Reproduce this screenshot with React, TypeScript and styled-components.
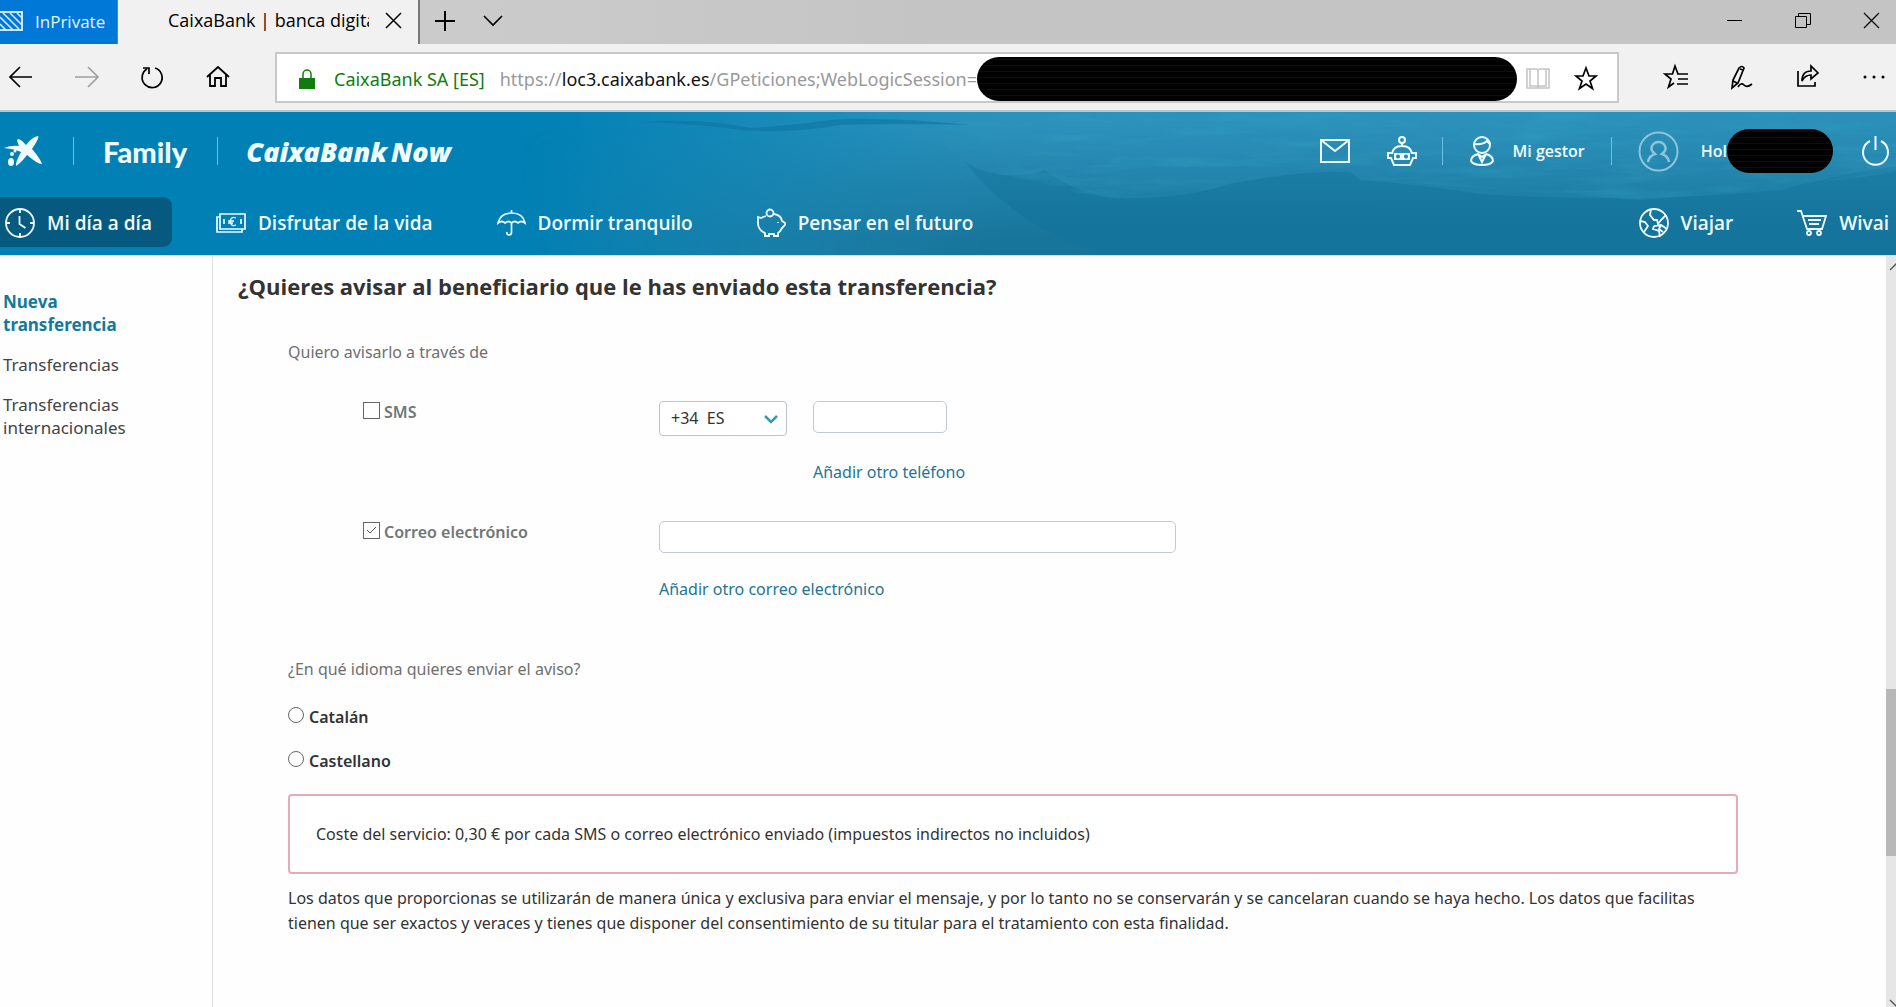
import React, { useState } from "react";
import styled, { createGlobalStyle } from "styled-components";

const GlobalStyle = createGlobalStyle`
  * { box-sizing: border-box; }
  body { margin: 0; background: #fefefe; font-family: "Noto Sans", "Open Sans", sans-serif; color: #333; }
  button { font: inherit; color: inherit; background: none; border: 0; padding: 0; cursor: pointer; }
  a { color: inherit; text-decoration: none; }
  svg { display: block; flex: none; overflow: visible; }
`;

const Page = styled.div`
  display: flex;
  flex-direction: column;
  min-height: 100vh;
`;

/* Browser chrome */

const TitleBar = styled.div`
  display: flex;
  height: 44px;
  background: linear-gradient(90deg, #cbcbcb 25%, #c4c4c4 50%);
  color: #000;
`;

const PrivateBadge = styled.div`
  display: flex;
  align-items: center;
  gap: 12px;
  width: 118px;
  padding-bottom: 2px;
  background: #0078d7;
  border-right: 1px solid #6d7f92;
  color: #e4f3ff;
  font: 17px "Open Sans", sans-serif;
`;

const Tab = styled.div`
  display: flex;
  align-items: center;
  gap: 17px;
  width: 302px;
  padding: 0 17px 4px 50px;
  background: #f1f1f1;
  border-right: 2px solid #777;
`;

const TabTitle = styled.span`
  flex: 1;
  overflow: hidden;
  white-space: nowrap;
  font: 18px "Open Sans", sans-serif;
`;

const TabTools = styled.div`
  display: flex;
  align-items: center;
  gap: 28px;
  padding: 0 0 2px 15px;
`;

const WindowControls = styled.div`
  display: flex;
  align-items: center;
  gap: 53px;
  margin-left: auto;
  padding: 0 17px 3px 0;
`;

const Toolbar = styled.div`
  display: flex;
  align-items: center;
  height: 68px;
  background: #f1f1f1;
  border-bottom: 2px solid #b9c7d2;
  color: #000;
`;

const NavTools = styled.div`
  display: flex;
  align-items: center;
  gap: 42px;
  width: 275px;
  padding-left: 9px;
`;

const AddressBar = styled.div`
  display: flex;
  flex: 1;
  align-items: center;
  height: 51px;
  min-width: 0;
  padding: 3px 19px 0 22px;
  background: #fff;
  border: 2px solid #c8c8c8;
  font: 18px "Noto Sans", sans-serif;
  white-space: nowrap;
`;

const Owner = styled.span`
  margin: 0 15px 0 19px;
  color: #107c10;
`;

const Url = styled.span`
  color: #999;
  & b { color: #111; font-weight: 400; }
`;

const Redaction = styled.span<{ $width?: number }>`
  ${(p) => (p.$width ? `width: ${p.$width}px;` : "flex: 1;")}
  height: 44px;
  border-radius: 22px;
  background: repeating-linear-gradient(0deg, #000 0 5px, #0d0d0d 5px 6px);
`;

const AddressTools = styled.div`
  display: flex;
  align-items: center;
  gap: 24px;
  margin-left: 9px;
`;

const PageTools = styled.div`
  display: flex;
  align-items: center;
  gap: 42px;
  padding: 0 10px 0 45px;
`;

/* Bank header */

const Header = styled.header`
  position: relative;
  height: 144px;
  background: #0080b4;
  border-bottom: 1px solid #cfe3ee;
  color: #effbff;
  font-family: "Open Sans", "Noto Sans", sans-serif;
  overflow: hidden;
`;

const WaterArt = styled.svg`
  position: absolute;
  inset: 0;
  width: 100%;
  height: 100%;
`;

const TopRow = styled.div`
  position: relative;
  display: flex;
  align-items: center;
  height: 78px;
  padding: 0 7px 0 4px;
`;

const Separator = styled.span<{ $before?: number }>`
  width: 1px;
  height: 28px;
  margin-left: ${(p) => p.$before ?? 0}px;
  background: #6cc0e0;
`;

const Segment = styled.a`
  margin: 0 30px 0 29px;
  font: 900 29px Lato, sans-serif;
`;

const Brand = styled.a`
  margin-left: 28px;
  font-size: 27px;
  font-style: italic;
  font-weight: 800;
  & span { margin-left: 4px; }
`;

const UserTools = styled.div`
  display: flex;
  align-items: center;
  margin-left: auto;
  font-size: 16px;
  font-weight: 600;
`;

const UserAction = styled.button<{ $after: number; $before?: number }>`
  display: flex;
  align-items: center;
  gap: 19px;
  margin: 0 ${(p) => p.$after}px 0 ${(p) => p.$before ?? 0}px;
`;

const Account = styled.a`
  display: flex;
  align-items: center;
  margin: 0 29px 0 26px;
`;

const Greeting = styled.span`
  margin-left: 22px;
`;

const MainNav = styled.nav`
  position: relative;
  display: flex;
  gap: 44px;
  margin-top: 7px;
  padding-right: 7px;
`;

const NavItem = styled.a<{ $active?: boolean; $push?: boolean; $last?: boolean }>`
  display: flex;
  align-items: center;
  gap: 12px;
  height: 50px;
  padding-top: 1px;
  padding-right: ${(p) => (p.$last ? 0 : 20)}px;
  padding-left: ${(p) => (p.$active ? 5 : 0)}px;
  margin-left: ${(p) => (p.$push ? "auto" : "0")};
  border-radius: 0 9px 9px 0;
  background: ${(p) => (p.$active ? "#065a80" : "transparent")};
  font-size: 19px;
  font-weight: 600;
  white-space: nowrap;
`;

/* Body */

const Body = styled.div`
  display: flex;
  flex: 1;
`;

const Sidebar = styled.aside`
  display: flex;
  flex-direction: column;
  gap: 17px;
  width: 213px;
  padding: 34px 60px 0 3px;
  border-right: 1px solid #dcdfe3;
`;

const SideLink = styled.a<{ $current?: boolean }>`
  font-size: 17px;
  line-height: 23px;
  font-weight: ${(p) => (p.$current ? 700 : 400)};
  color: ${(p) => (p.$current ? "#147a9c" : "#444")};
`;

const Main = styled.main`
  flex: 1;
  padding: 15px 148px 40px 25px;
`;

const Title = styled.h1`
  margin: 0;
  font-family: "Open Sans", sans-serif;
  font-size: 22px;
  line-height: 30px;
  font-weight: 700;
  color: #333;
`;

const Form = styled.form`
  margin: 39px 0 0 50px;
  font-size: 16px;
  line-height: 25px;
`;

const Hint = styled.p`
  margin: 0;
  color: #6f6f6f;
`;

const Channel = styled.div`
  display: grid;
  grid-template-columns: 296px 1fr;
  padding-left: 75px;
  margin-top: 36px;
`;

const Choice = styled.label<{ $muted?: boolean }>`
  display: flex;
  gap: 4px;
  align-self: start;
  width: fit-content;
  line-height: ${(p) => (p.$muted ? 23 : 25)}px;
  font-weight: 600;
  color: ${(p) => (p.$muted ? "#6f7779" : "#333")};
`;

const CheckBox = styled.input`
  appearance: none;
  width: 17px;
  height: 17px;
  margin: 1px 0 0;
  border: 1px solid #666;
  background: #fff;
  &:checked {
    background: #fff url("data:image/svg+xml,%3Csvg xmlns='http://www.w3.org/2000/svg' viewBox='0 0 15 15'%3E%3Cpath d='M3 7l3 3 6-6' fill='none' stroke='%23555'/%3E%3C/svg%3E");
  }
`;

const Radio = styled.input`
  appearance: none;
  width: 16px;
  height: 16px;
  margin: 2px 1px 0 0;
  border: 1px solid #666;
  border-radius: 50%;
  background: #fff;
  &:checked { box-shadow: inset 0 0 0 3px #fff; background: #333; }
`;

const Fields = styled.div`
  display: grid;
  grid-template-columns: 128px 134px;
  column-gap: 26px;
`;

const SelectWrap = styled.div`
  position: relative;
  & svg { position: absolute; right: 9px; top: 14px; pointer-events: none; }
`;

const Select = styled.select`
  appearance: none;
  width: 100%;
  height: 35px;
  padding: 0 28px 0 11px;
  border: 1px solid #bcc3cc;
  border-radius: 4px;
  background: #fff;
  color: #333;
  font: inherit;
`;

const TextBox = styled.input`
  width: 100%;
  height: 32px;
  padding: 0 11px;
  border: 1px solid #c3c9d2;
  border-radius: 5px;
  background: #fff;
  font: inherit;
`;

const EmailField = styled.div`
  max-width: 517px;
`;

const AddLink = styled.a<{ $column?: number }>`
  display: block;
  width: fit-content;
  margin-top: 24px;
  grid-column: ${(p) => p.$column ?? "auto"};
  color: #1f7594;
  white-space: nowrap;
`;

const Languages = styled.fieldset`
  display: flex;
  flex-direction: column;
  gap: 19px;
  margin: 55px 0 0;
  padding: 0;
  border: 0;
  & legend { padding: 0; margin-bottom: 23px; color: #6f6f6f; }
`;

const Notice = styled.p`
  margin: 20px 0 12px;
  padding: 25px 26px;
  border: 2px solid #e5abb6;
  border-radius: 4px;
  background: #fff;
  line-height: 26px;
`;

const Legal = styled.p`
  margin: 0;
  line-height: 25px;
`;

const ScrollTrack = styled.div`
  display: flex;
  flex-direction: column;
  justify-content: space-between;
  align-items: flex-end;
  width: 10px;
  background: #e6e6e6;
  overflow: hidden;
`;

const ScrollThumb = styled.div`
  width: 10px;
  height: 167px;
  margin-top: 273px;
  background: #b8b8b8;
`;

const Icon = ({ w, h, s = 2, children }: { w: number; h: number; s?: number; children: React.ReactNode }) => (
  <svg width={w} height={h} viewBox={`0 0 ${w} ${h}`} fill="none" stroke="currentColor" strokeWidth={s} aria-hidden="true">
    {children}
  </svg>
);

const Stripes = () => (
  <svg width="23" height="20" viewBox="0 0 23 20" fill="none" stroke="#cfe8ff" strokeWidth="2" aria-hidden="true">
    <path d="M0 1h22v18H0" />
    <path d="M0 13l6 6M0 6l13 13M3 2l16 16M10 2l12 12M17 2l5 5" strokeWidth="1.6" />
  </svg>
);

const Water = () => (
  <WaterArt viewBox="0 0 1896 143" preserveAspectRatio="none" aria-hidden="true">
    <defs>
      <linearGradient id="light" x1="0" x2="1" y1="0" y2="0">
        <stop offset="0" stopColor="#3a99bf" stopOpacity="0" />
        <stop offset="0.35" stopColor="#3495bd" stopOpacity="0.85" />
        <stop offset="1" stopColor="#2b8fb8" />
      </linearGradient>
      <linearGradient id="depthFade" x1="0" x2="0" y1="0" y2="1">
        <stop offset="0.1" stopColor="#17749a" stopOpacity="0" />
        <stop offset="0.9" stopColor="#17749a" />
      </linearGradient>
      <linearGradient id="sideFade" x1="0" x2="1" y1="0" y2="0">
        <stop offset="0" stopColor="#fff" stopOpacity="0" />
        <stop offset="0.35" stopColor="#fff" />
      </linearGradient>
      <linearGradient id="rippleFade" x1="0" x2="1" y1="0" y2="0">
        <stop offset="0" stopColor="#fff" stopOpacity="0" />
        <stop offset="0.15" stopColor="#fff" />
      </linearGradient>
      <linearGradient id="deep" x1="0" x2="0" y1="0" y2="1">
        <stop offset="0" stopColor="#1a7ba3" stopOpacity="0.7" />
        <stop offset="0.7" stopColor="#15749b" />
      </linearGradient>
      <mask id="side"><rect x="520" width="1376" height="143" fill="url(#sideFade)" /></mask>
      <mask id="surface">
        <path d="M900 0H1896V60Q1780 78 1640 88Q1420 72 1360 66Q1300 58 1230 72Q1180 88 1110 86Q1040 76 965 50Z" fill="url(#rippleFade)" />
      </mask>
      <filter id="ripple" x="0" y="0" width="1" height="1">
        <feTurbulence type="fractalNoise" baseFrequency="0.012 0.09" numOctaves="3" seed="4" />
        <feColorMatrix values="0 0 0 0 0.04  0 0 0 0 0.38  0 0 0 0 0.55  1.6 0 0 0 -0.65" />
      </filter>
    </defs>
    <rect x="520" width="1376" height="143" fill="url(#light)" />
    <g mask="url(#side)">
      <rect x="520" width="1376" height="143" fill="url(#depthFade)" />
      <path d="M965 50Q1000 72 1045 58Q1070 78 1110 86Q1180 88 1230 72Q1300 58 1350 60L1360 68Q1420 72 1480 82Q1640 92 1780 78Q1840 62 1896 54V143H1100Q1010 110 965 50Z" fill="url(#deep)" />
    </g>
    <g mask="url(#surface)">
      <rect x="900" width="996" height="100" filter="url(#ripple)" opacity="0.45" />
    </g>
    <path d="M640 10Q700 6 750 16Q790 14 830 8Q880 4 970 13Q880 11 840 13Q790 22 740 18Q700 12 640 10Z" fill="#0e75a1" opacity="0.6" />
  </WaterArt>
);

const CaixaStar = () => (
  <svg width="38" height="31" viewBox="0 0 38 31" fill="currentColor" aria-hidden="true">
    <path d="M0 12Q7 9 15 10Q12 4 14 3Q17 3 22 9Q28 1 34 0Q36 1 28 13Q36 22 38 28Q35 29 23 19Q17 27 12 30Q11 27 17 16Q11 13 0 12Z" />
    <circle cx="11" cy="15" r="1.5" />
    <circle cx="8" cy="18" r="2" />
    <ellipse cx="7" cy="26" rx="3" ry="4" />
  </svg>
);

export default function App() {
  const [sms, setSms] = useState(false);
  const [email, setEmail] = useState(true);

  return (
    <>
      <GlobalStyle />
      <Page>
        <TitleBar>
          <PrivateBadge><Stripes />InPrivate</PrivateBadge>
          <Tab>
            <TabTitle>CaixaBank | banca digital</TabTitle>
            <button aria-label="Cerrar pestaña">
              <Icon w={15} h={15} s={1.5}><path d="M0 0l15 15M15 0L0 15" /></Icon>
            </button>
          </Tab>
          <TabTools>
            <button aria-label="Nueva pestaña"><Icon w={20} h={20}><path d="M10 0v20M0 10h20" /></Icon></button>
            <button aria-label="Lista de pestañas"><Icon w={20} h={10} s={1.6}><path d="M1 0l9 9 9-9" /></Icon></button>
          </TabTools>
          <WindowControls>
            <button aria-label="Minimizar"><Icon w={15} h={15} s={1}><path d="M0 7.5h15" /></Icon></button>
            <button aria-label="Restaurar"><Icon w={16} h={15} s={1}><path d="M.5 3.5h11v11H.5zM3.5 3.5v-3h12v11h-4" /></Icon></button>
            <button aria-label="Cerrar"><Icon w={15} h={15} s={1.2}><path d="M0 0l15 15M15 0L0 15" /></Icon></button>
          </WindowControls>
        </TitleBar>

        <Toolbar>
          <NavTools>
            <button aria-label="Atrás"><Icon w={24} h={22} s={1.7}><path d="M1 11h22M11 1L1 11l10 10" /></Icon></button>
            <button aria-label="Adelante"><Icon w={24} h={22} s={1.7}><path d="M0 11h23M13 1l10 10-10 10" stroke="#a0a0a0" /></Icon></button>
            <button aria-label="Actualizar"><Icon w={24} h={22} s={1.7}><path d="M14 2a10 10 0 1 1-8 1M2 2h6v6" /></Icon></button>
            <button aria-label="Inicio"><Icon w={24} h={22} s={1.8}><path d="M0 11L11 1l11 10M3 9v11h5v-8h6v8h5V9" /></Icon></button>
          </NavTools>
          <AddressBar>
            <svg width="16" height="20" viewBox="0 0 16 20" aria-hidden="true">
              <rect y="9" width="16" height="11" fill="#107c10" />
              <path d="M4 9V5a4 4 0 0 1 8 0v4" fill="none" stroke="#107c10" strokeWidth="1.5" />
            </svg>
            <Owner>CaixaBank SA [ES]</Owner>
            <Url>https://<b>loc3.caixabank.es</b>/GPeticiones;WebLogicSession=</Url>
            <Redaction />
            <AddressTools>
              <button aria-label="Vista de lectura">
                <Icon w={24} h={22} s={1.5}><path d="M4 1H1v19h22V1h-3M4 1h6q2 0 2 2 0-2 2-2h6v17h-6q-2 0-2 2 0-2-2-2H4zM12 3v16" stroke="#c4c4c4" /></Icon>
              </button>
              <button aria-label="Añadir a favoritos">
                <Icon w={24} h={22} s={1.7}><path d="M12 0l3 8h7l-6 5 2.500 7.500-6.500-4.500-6.500 4.500L8 13 2 8h7z" /></Icon>
              </button>
            </AddressTools>
          </AddressBar>
          <PageTools>
            <button aria-label="Favoritos">
              <Icon w={24} h={24} s={1.7}><path d="M16 9h-2L11 1 8.500 9H1l6 5-2.500 8 5.500-4M13 9h11M14 14h10M13 19h11" /></Icon>
            </button>
            <button aria-label="Notas">
              <Icon w={24} h={24} s={1.7}><path d="M9 3q3-3 5 0L8 18l-6 5 1-8zM10 4l3 1M3 16l4 2M8 22q3-5 6-2t8-1" /></Icon>
            </button>
            <button aria-label="Compartir">
              <Icon w={24} h={24} s={1.7}><path d="M2 6v15h17v-4M6 16q0-10 9-10V1l7 7-7 6v-4Q9 10 6 16z" /></Icon>
            </button>
            <button aria-label="Más">
              <Icon w={24} h={24} s={0}><g fill="#000"><circle cx="3" cy="12" r="1.5" /><circle cx="12" cy="12" r="1.5" /><circle cx="21" cy="12" r="1.5" /></g></Icon>
            </button>
          </PageTools>
        </Toolbar>

        <Header>
          <Water />
          <TopRow>
            <a href="#inicio" aria-label="CaixaBank"><CaixaStar /></a>
            <Separator $before={31} />
            <Segment href="#family">Family</Segment>
            <Separator />
            <Brand href="#now">CaixaBank<span>Now</span></Brand>
            <UserTools>
              <UserAction $after={37} aria-label="Mensajes">
                <Icon w={30} h={24}><path d="M1 1h28v22H1zM1 1l14 11L29 1" /></Icon>
              </UserAction>
              <UserAction $after={25} aria-label="Asistente">
                <Icon w={30} h={30}>
                  <circle cx="15" cy="4" r="3" />
                  <path d="M15 7v4M5 18q1-8 10-8t10 8M5 17H1v5h3l3 7h16l3-7h3v-5h-4" />
                  <path d="M7 17h16v7H7z" fill="currentColor" stroke="none" />
                  <circle cx="11" cy="20.5" r="1" stroke="#2786ac" /><circle cx="19" cy="20.5" r="1" stroke="#2786ac" />
                </Icon>
              </UserAction>
              <Separator />
              <UserAction $after={26} $before={27}>
                <Icon w={24} h={30}>
                  <circle cx="12" cy="9" r="8" />
                  <path d="M4 8q9 1 13-3l3 3M8 18q-7 2-7 7 2 4 11 4t11-4q0-5-7-7M8 18l4 8 4-8-4 3z" />
                </Icon>
                Mi gestor
              </UserAction>
              <Separator />
              <Account href="#perfil">
                <svg width="41" height="41" viewBox="0 0 41 41" fill="none" stroke="#8fc3dc" strokeWidth="2" aria-hidden="true">
                  <circle cx="20.5" cy="20.5" r="19" />
                  <path d="M10 31q1-6 7-8-5-4-3-8 2-4 6.500-4t6.500 4q2 4-3 8 6 2 7 8" strokeWidth="2.5" />
                </svg>
                <Greeting>Hol</Greeting>
                <Redaction $width={106} />
              </Account>
              <button aria-label="Desconectar">
                <Icon w={27} h={30}><path d="M13.500 0v14M8 5a12.500 12.500 0 1 0 11 0" /></Icon>
              </button>
            </UserTools>
          </TopRow>
          <MainNav>
            <NavItem href="#dia" $active>
              <Icon w={30} h={30} s={1.8}><circle cx="15" cy="15" r="14" /><path d="M14.500 8v8l6 4M15 1v4M15 25v4M1 15h4M25 15h4" /></Icon>
              Mi día a día
            </NavItem>
            <NavItem href="#vida">
              <Icon w={30} h={20} s={1.7}>
                <path d="M4 1h25v15H4zM4 4H1v15h25v-3M8 6v5M25 6v5" />
                <path d="M20 5q-5-2-6 3.500 1 5.500 6 3.500M12 8h6M12 10h5" strokeWidth="1.3" />
              </Icon>
              Disfrutar de la vida
            </NavItem>
            <NavItem href="#tranquilo">
              <Icon w={29} h={26} s={1.7}><path d="M14.500 0v3M1 13Q3 3 14.500 3T28 13q-4-3-7 0-3-3-6.500 0-3-3-6.500 0-3-3-7 0zM14.500 13v9q0 3-2.500 3t-2-3" /></Icon>
              Dormir tranquilo
            </NavItem>
            <NavItem href="#futuro">
              <Icon w={29} h={28} s={1.8}><circle cx="13" cy="4" r="3.5" /><path d="M9 7Q6 8 4 9L1 8v6q0 7 7 10v3h4v-2h5v2h4v-3q2-1 4-5l3-3v-2l-3-2q-1-6-8-7M21 13v1" /></Icon>
              Pensar en el futuro
            </NavItem>
            <NavItem href="#viajar" $push>
              <Icon w={30} h={30} s={1.8}><circle cx="15" cy="15" r="14" /><path d="M12 1l-1 6 4 5h3l1 4 3-4 5-5M1 13l5 1 3 4-4 6M15 18l7-1 6 4M15 18l-1 3 6 2 1 6M22 17l-2 4 4 3" /></Icon>
              Viajar
            </NavItem>
            <NavItem href="#wivai" $last>
              <Icon w={30} h={26} s={1.8}><path d="M0 1h4l6 18h15l4-13H6M11 10h13M12 14h10" /><circle cx="12" cy="23" r="2" /><circle cx="22" cy="23" r="2" /></Icon>
              Wivai
            </NavItem>
          </MainNav>
        </Header>

        <Body>
          <Sidebar>
            <SideLink href="#nueva" $current>Nueva transferencia</SideLink>
            <SideLink href="#transferencias">Transferencias</SideLink>
            <SideLink href="#internacionales">Transferencias internacionales</SideLink>
          </Sidebar>
          <Main>
            <Title>¿Quieres avisar al beneficiario que le has enviado esta transferencia?</Title>
            <Form>
              <Hint>Quiero avisarlo a través de</Hint>
              <Channel>
                <Choice $muted>
                  <CheckBox type="checkbox" checked={sms} onChange={() => setSms(!sms)} />
                  SMS
                </Choice>
                <Fields>
                  <SelectWrap>
                    <Select aria-label="Prefijo" defaultValue="34">
                      <option value="34">{"+34\u00a0\u00a0ES"}</option>
                    </Select>
                    <svg width="14" height="9" viewBox="0 0 14 9" fill="none" stroke="#3f98a8" strokeWidth="2.5" aria-hidden="true"><path d="M1 1l6 6 6-6" /></svg>
                  </SelectWrap>
                  <TextBox type="tel" aria-label="Teléfono" />
                  <AddLink href="#telefono" $column={2}>Añadir otro teléfono</AddLink>
                </Fields>
              </Channel>
              <Channel>
                <Choice $muted>
                  <CheckBox type="checkbox" checked={email} onChange={() => setEmail(!email)} />
                  Correo electrónico
                </Choice>
                <EmailField>
                  <TextBox type="email" aria-label="Correo electrónico" />
                  <AddLink href="#correo">Añadir otro correo electrónico</AddLink>
                </EmailField>
              </Channel>
              <Languages>
                <legend>¿En qué idioma quieres enviar el aviso?</legend>
                <Choice><Radio type="radio" name="idioma" />Catalán</Choice>
                <Choice><Radio type="radio" name="idioma" />Castellano</Choice>
              </Languages>
              <Notice>Coste del servicio: 0,30 € por cada SMS o correo electrónico enviado (impuestos indirectos no incluidos)</Notice>
              <Legal>
                Los datos que proporcionas se utilizarán de manera única y exclusiva para enviar el mensaje, y por lo tanto no se
                conservarán y se cancelaran cuando se haya hecho. Los datos que facilitas tienen que ser exactos y veraces y tienes
                que disponer del consentimiento de su titular para el tratamiento con esta finalidad.
              </Legal>
            </Form>
          </Main>
          <ScrollTrack aria-hidden="true">
            <Icon w={6} h={16} s={1.3}><path d="M0 14l8-8" stroke="#555" /></Icon>
            <ScrollThumb />
            <Icon w={6} h={8} s={1.3}><path d="M0 1l8 8" stroke="#555" /></Icon>
          </ScrollTrack>
        </Body>
      </Page>
    </>
  );
}
